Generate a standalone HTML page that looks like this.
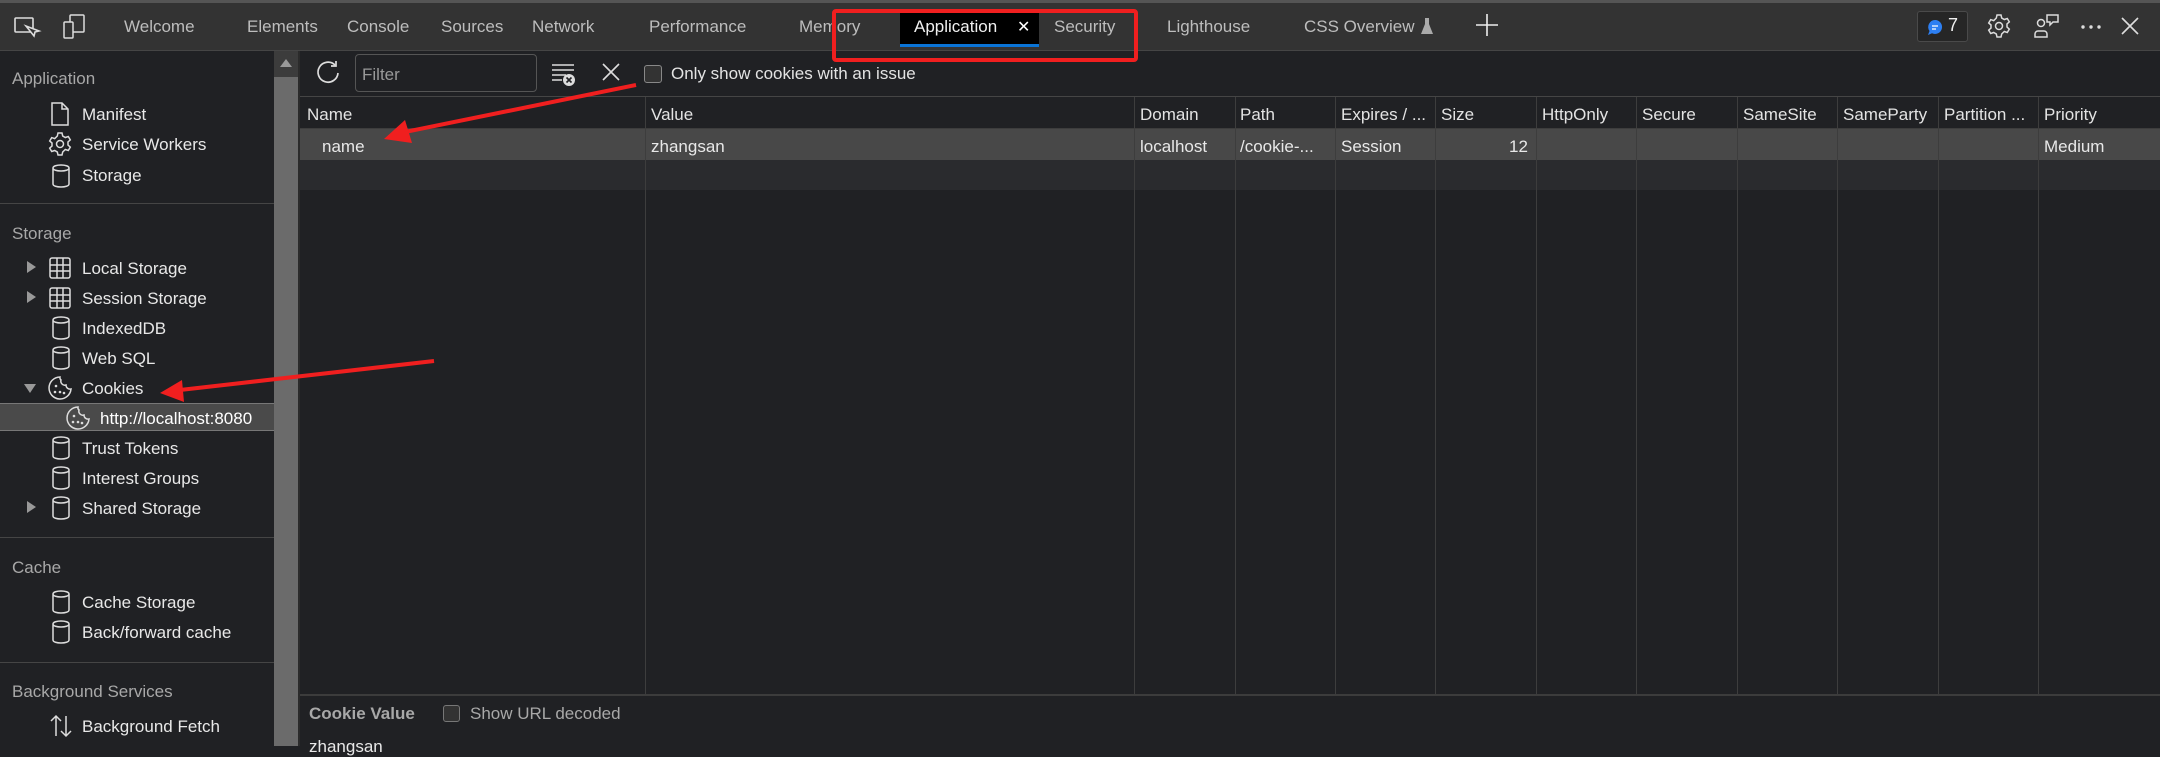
<!DOCTYPE html>
<html><head><meta charset="utf-8">
<style>
*{margin:0;padding:0;box-sizing:border-box}
body{width:2160px;height:746px;overflow:hidden;background:#202124;font-family:"Liberation Sans",sans-serif;color:#e3e3e3;position:relative}
.a{position:absolute;white-space:nowrap}
.tab{position:absolute;top:17px;font-size:17px;color:#bdbdbd}
.si{position:absolute;font-size:17px;color:#e8e8e8;left:82px;margin-top:2px}
.sh{position:absolute;font-size:17px;color:#a8a8a8;left:12px;margin-top:2px}
.th{position:absolute;top:105px;font-size:17px;color:#e3e3e3}
.td{position:absolute;top:137px;font-size:17px;color:#e8e8e8}
.vl{position:absolute;width:1px;background:#3d3d3d;top:97px;height:597px}
svg{position:absolute;overflow:visible}
</style></head><body>
<div class="a" style="left:0;top:0;width:2160px;height:3px;background:#555"></div>
<div class="a" style="left:0;top:3px;width:2160px;height:47px;background:#333"></div>
<div class="a" style="left:0;top:50px;width:2160px;height:1px;background:#454545"></div>
<svg style="left:14px;top:16px" width="26" height="24" viewBox="0 0 26 24" fill="none" stroke="#ddd" stroke-width="1.6"><rect x="1" y="2" width="18" height="14" rx="1"/><path d="M12 10l8 10 1-4 4-1z" fill="#333"/></svg>
<svg style="left:62px;top:14px" width="24" height="26" viewBox="0 0 24 26" fill="none" stroke="#ddd" stroke-width="1.5"><rect x="8" y="1" width="14" height="17" rx="1"/><rect x="2" y="8" width="9" height="16" rx="1" fill="#333"/></svg>
<div class="tab" style="left:124px">Welcome</div>
<div class="tab" style="left:247px">Elements</div>
<div class="tab" style="left:347px">Console</div>
<div class="tab" style="left:441px">Sources</div>
<div class="tab" style="left:532px">Network</div>
<div class="tab" style="left:649px">Performance</div>
<div class="tab" style="left:799px">Memory</div>
<div class="a" style="left:900px;top:9px;width:139px;height:38px;background:#000"></div>
<div class="a" style="left:900px;top:44px;width:139px;height:3px;background:#0a74d6"></div>
<div class="tab" style="left:914px;color:#f0f0f0">Application</div>
<div class="tab" style="left:1017px;color:#fff;font-size:16px">✕</div>
<div class="tab" style="left:1054px">Security</div>
<div class="tab" style="left:1167px">Lighthouse</div>
<div class="tab" style="left:1304px">CSS Overview</div>
<svg style="left:1421px;top:18px" width="12" height="16" viewBox="0 0 12 16"><path d="M4 0h4v6l4 10H0l4-10z" fill="#aaa"/></svg>
<svg style="left:1476px;top:14px" width="22" height="22" viewBox="0 0 22 22" stroke="#eee" stroke-width="1.6"><path d="M11 0v22M0 11h22"/></svg>
<div class="a" style="left:832px;top:9px;width:306px;height:53px;border:4px solid #f01f1f;border-radius:4px"></div>
<div class="a" style="left:1917px;top:11px;width:51px;height:31px;border:1px solid #4a4a4a;border-radius:3px;background:#262626"></div>
<svg style="left:1928px;top:20px" width="14" height="15" viewBox="0 0 14 15"><path d="M7 0a7 7 0 1 1-3 13.3L0 15l1.5-4A7 7 0 0 1 7 0z" fill="#2d7ff2"/><path d="M4 6h6M4 9h4" stroke="#fff" stroke-width="1.2"/></svg>
<div class="a" style="left:1948px;top:15px;font-size:18px;color:#eee">7</div>
<svg style="left:1987px;top:14px" width="24" height="24" viewBox="0 0 24 24" fill="none" stroke="#ddd" stroke-width="1.5"><circle cx="12" cy="12" r="3.5"/><path d="M10 1h4l.7 3 2.6 1.5 3-1 2 3.4-2.3 2.1v3l2.3 2.1-2 3.4-3-1L14.7 20 14 23h-4l-.7-3-2.6-1.5-3 1-2-3.4L4 14v-3L1.7 9 3.7 5.6l3 1L9.3 4z"/></svg>
<svg style="left:2034px;top:13px" width="26" height="26" viewBox="0 0 26 26" fill="none" stroke="#ddd" stroke-width="1.5"><circle cx="7" cy="10" r="3.5"/><path d="M1 24v-3a3 3 0 0 1 3-3h6a3 3 0 0 1 3 3v3z"/><path d="M13 2h11v7h-5l-3 3V9h-3z"/></svg>
<svg style="left:2081px;top:25px" width="22" height="4"><circle cx="2" cy="2" r="1.7" fill="#ddd"/><circle cx="10" cy="2" r="1.7" fill="#ddd"/><circle cx="18" cy="2" r="1.7" fill="#ddd"/></svg>
<svg style="left:2121px;top:17px" width="18" height="18" viewBox="0 0 18 18" stroke="#ddd" stroke-width="1.6"><path d="M1 1l16 16M17 1L1 17"/></svg>

<div class="a" style="left:274px;top:51px;width:24px;height:695px;background:#6b6b6b"></div>
<div class="a" style="left:274px;top:51px;width:24px;height:26px;background:#3c3c3c"></div>
<svg style="left:280px;top:59px" width="12" height="8"><path d="M0 8L6 0l6 8z" fill="#999"/></svg>
<div class="a" style="left:298px;top:51px;width:2px;height:695px;background:#2b2b2b"></div>
<div class="sh" style="top:67px">Application</div>
<div class="si" style="top:103px">Manifest</div>
<div class="si" style="top:133px">Service Workers</div>
<div class="si" style="top:164px">Storage</div>
<div class="a" style="left:0;top:203px;width:274px;height:1px;background:#454545"></div>
<div class="sh" style="top:222px">Storage</div>
<div class="si" style="top:257px">Local Storage</div>
<div class="si" style="top:287px">Session Storage</div>
<div class="si" style="top:317px">IndexedDB</div>
<div class="si" style="top:347px">Web SQL</div>
<div class="si" style="top:377px">Cookies</div>
<div class="a" style="left:0;top:403px;width:274px;height:28px;background:#4a4a4a;border-top:1px solid #777;border-bottom:1px solid #777"></div>
<div class="si" style="top:407px;left:100px;color:#fff">http://localhost:8080</div>
<div class="si" style="top:437px">Trust Tokens</div>
<div class="si" style="top:467px">Interest Groups</div>
<div class="si" style="top:497px">Shared Storage</div>
<div class="a" style="left:0;top:537px;width:274px;height:1px;background:#454545"></div>
<div class="sh" style="top:556px">Cache</div>
<div class="si" style="top:591px">Cache Storage</div>
<div class="si" style="top:621px">Back/forward cache</div>
<div class="a" style="left:0;top:662px;width:274px;height:1px;background:#454545"></div>
<div class="sh" style="top:680px">Background Services</div>
<div class="si" style="top:715px">Background Fetch</div>
<svg style="left:50px;top:102px" width="20" height="24" viewBox="0 0 20 24" fill="none" stroke="#ddd" stroke-width="1.5"><path d="M2 1h10l6 6v16H2z M12 1v6h6"/></svg>
<svg style="left:48px;top:132px" width="24" height="24" viewBox="0 0 24 24" fill="none" stroke="#ddd" stroke-width="1.5"><circle cx="12" cy="12" r="3.5"/><path d="M10 1h4l.7 3 2.6 1.5 3-1 2 3.4-2.3 2.1v3l2.3 2.1-2 3.4-3-1L14.7 20 14 23h-4l-.7-3-2.6-1.5-3 1-2-3.4L4 14v-3L1.7 9 3.7 5.6l3 1L9.3 4z"/></svg>
<svg width="0" height="0"><defs><g id="cyl"><path d="M1 4c0-4 16-4 16 0v16c0 4-16 4-16 0z M1 4c0 4 16 4 16 0" fill="none" stroke="#ddd" stroke-width="1.5"/></g>
<g id="grid"><rect x="1" y="1" width="20" height="20" rx="2" fill="none" stroke="#ddd" stroke-width="1.5"/><path d="M1 8h20M1 14h20M8 1v20M14 1v20" stroke="#ddd" stroke-width="1.5"/></g>
<g id="cook"><path d="M12 1a11 11 0 1 0 11 12 4 4 0 0 1-5-4 4 4 0 0 1-5-5 3 3 0 0 1-1-3z" fill="none" stroke="#ddd" stroke-width="1.5"/><circle cx="8" cy="10" r="1.3" fill="#ddd"/><circle cx="12" cy="16" r="1.3" fill="#ddd"/><circle cx="7" cy="16" r="1.3" fill="#ddd"/><circle cx="16" cy="17" r="1.3" fill="#ddd"/></g>
<path id="tri" d="M0 0l9 6-9 6z" fill="#999"/></defs></svg>
<svg style="left:52px;top:164px" width="18" height="24"><use href="#cyl"/></svg>
<svg style="left:49px;top:257px" width="22" height="22"><use href="#grid"/></svg>
<svg style="left:49px;top:287px" width="22" height="22"><use href="#grid"/></svg>
<svg style="left:52px;top:316px" width="18" height="24"><use href="#cyl"/></svg>
<svg style="left:52px;top:346px" width="18" height="24"><use href="#cyl"/></svg>
<svg style="left:48px;top:376px" width="24" height="24"><use href="#cook"/></svg>
<svg style="left:66px;top:406px" width="24" height="24"><use href="#cook"/></svg>
<svg style="left:52px;top:436px" width="18" height="24"><use href="#cyl"/></svg>
<svg style="left:52px;top:466px" width="18" height="24"><use href="#cyl"/></svg>
<svg style="left:52px;top:496px" width="18" height="24"><use href="#cyl"/></svg>
<svg style="left:52px;top:590px" width="18" height="24"><use href="#cyl"/></svg>
<svg style="left:52px;top:620px" width="18" height="24"><use href="#cyl"/></svg>
<svg style="left:50px;top:714px" width="22" height="24" viewBox="0 0 22 24" fill="none" stroke="#ddd" stroke-width="1.5"><path d="M6 22V2M1 7l5-5 5 5M16 2v20M11 17l5 5 5-5"/></svg>
<svg style="left:27px;top:261px" width="10" height="12"><use href="#tri"/></svg>
<svg style="left:27px;top:291px" width="10" height="12"><use href="#tri"/></svg>
<svg style="left:27px;top:501px" width="10" height="12"><use href="#tri"/></svg>
<svg style="left:24px;top:384px" width="12" height="10"><path d="M0 0h12l-6 9z" fill="#999"/></svg>

<svg style="left:315px;top:60px" width="26" height="26" viewBox="0 0 26 26" fill="none" stroke="#ddd" stroke-width="1.7"><path d="M20 5A10 10 0 1 0 23 13"/><path d="M21 1v5h-5"/></svg>
<div class="a" style="left:355px;top:54px;width:182px;height:38px;border:1px solid #555;border-radius:4px;background:#202124"></div>
<div class="a" style="left:362px;top:65px;font-size:17px;color:#999">Filter</div>
<svg style="left:551px;top:63px" width="26" height="24" viewBox="0 0 26 24" stroke="#ddd" stroke-width="1.5"><path d="M1 2h22M1 7h22M1 12h14M1 17h10"/><circle cx="18" cy="17" r="6" fill="#ddd" stroke="none"/><path d="M15.5 14.5l5 5M20.5 14.5l-5 5" stroke="#202124" stroke-width="1.6"/></svg>
<svg style="left:602px;top:63px" width="18" height="18" viewBox="0 0 18 18" stroke="#ddd" stroke-width="1.6"><path d="M1 1l16 16M17 1L1 17"/></svg>
<div class="a" style="left:644px;top:65px;width:18px;height:18px;border:1.5px solid #888;border-radius:3px;background:#333"></div>
<div class="a" style="left:671px;top:64px;font-size:17px;color:#e3e3e3">Only show cookies with an issue</div>
<div class="a" style="left:300px;top:96px;width:1860px;height:1px;background:#454545"></div>

<div class="a" style="left:300px;top:97px;width:1860px;height:32px;background:#202124;border-bottom:1px solid #3d3d3d"></div>
<div class="a" style="left:300px;top:129px;width:1860px;height:31px;background:#484848"></div>
<div class="a" style="left:300px;top:160px;width:1860px;height:30px;background:#2a2b2e"></div>
<div class="vl" style="left:645px"></div><div class="vl" style="left:1134px"></div><div class="vl" style="left:1235px"></div><div class="vl" style="left:1335px"></div><div class="vl" style="left:1435px"></div><div class="vl" style="left:1536px"></div><div class="vl" style="left:1636px"></div><div class="vl" style="left:1737px"></div><div class="vl" style="left:1837px"></div><div class="vl" style="left:1938px"></div><div class="vl" style="left:2038px"></div>
<div class="th" style="left:307px">Name</div>
<div class="th" style="left:651px">Value</div>
<div class="th" style="left:1140px">Domain</div>
<div class="th" style="left:1240px">Path</div>
<div class="th" style="left:1341px">Expires / ...</div>
<div class="th" style="left:1441px">Size</div>
<div class="th" style="left:1542px">HttpOnly</div>
<div class="th" style="left:1642px">Secure</div>
<div class="th" style="left:1743px">SameSite</div>
<div class="th" style="left:1843px">SameParty</div>
<div class="th" style="left:1944px">Partition ...</div>
<div class="th" style="left:2044px">Priority</div>
<div class="td" style="left:322px">name</div>
<div class="td" style="left:651px">zhangsan</div>
<div class="td" style="left:1140px">localhost</div>
<div class="td" style="left:1240px">/cookie-...</div>
<div class="td" style="left:1341px">Session</div>
<div class="td" style="left:1509px">12</div>
<div class="td" style="left:2044px">Medium</div>

<div class="a" style="left:300px;top:694px;width:1860px;height:52px;background:#202124;border-top:2px solid #3c3c3c"></div>
<div class="a" style="left:309px;top:704px;font-size:17px;font-weight:bold;color:#a8a8a8">Cookie Value</div>
<div class="a" style="left:443px;top:705px;width:17px;height:17px;border:1.5px solid #777;border-radius:3px;background:#333"></div>
<div class="a" style="left:470px;top:704px;font-size:17px;color:#a8a8a8">Show URL decoded</div>
<div class="a" style="left:309px;top:737px;font-size:17px;color:#e8e8e8">zhangsan</div>

<svg style="left:0;top:0" width="2160" height="746">
<path d="M636 85L400 133" stroke="#f01f1f" stroke-width="4"/>
<path d="M384 139L405 120L412 143z" fill="#f01f1f"/>
<path d="M434 361L180 390" stroke="#f01f1f" stroke-width="4"/>
<path d="M160 393L182 380L184 402z" fill="#f01f1f"/>
</svg>
</body></html>
